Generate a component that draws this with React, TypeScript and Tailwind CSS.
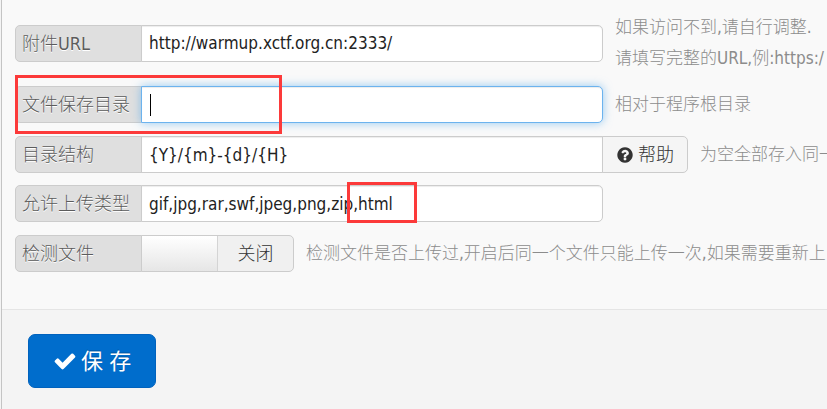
import { useId, useState, type ReactNode } from "react";

const inputBase = "h-[37px] w-[462px] min-w-0 border bg-white px-[7px] text-[17px] text-[#222] outline-none";
const inputPlain = "border-[#ccc] shadow-[inset_0_1px_1px_rgba(0,0,0,0.075)]";
const inputActive = "border-[#6cb3ee] shadow-[inset_0_1px_1px_rgba(0,0,0,0.075),0_0_10px_rgba(82,168,236,0.6)]";

function AddOn({ htmlFor, children }: { htmlFor: string; children: ReactNode }) {
  return (
    <label
      htmlFor={htmlFor}
      className="-mr-px flex h-[37px] w-[127px] shrink-0 items-center whitespace-nowrap rounded-l-[5px] border border-[#ccc] bg-[#dfdfdf] pl-1.5 text-[#5c5c5c] [text-shadow:0_1px_0_#fff]"
    >
      {children}
    </label>
  );
}

function Hint({ children }: { children: ReactNode }) {
  return (
    <p className="min-w-0 flex-1 overflow-hidden whitespace-nowrap text-[17px] leading-[31px] text-[#8c8c8c]">
      {children}
    </p>
  );
}

function HelpIcon() {
  return (
    <svg viewBox="0 0 1792 1792" className="size-[18px]" fill="currentColor" aria-hidden="true">
      <path d="M1024 1376v-192q0-14-9-23t-23-9h-192q-14 0-23 9t-9 23v192q0 14 9 23t23 9h192q14 0 23-9t9-23zm256-672q0-88-55.5-163t-138.5-116-170-41q-243 0-371 213-15 24 8 42l132 100q7 6 19 6 16 0 25-12 53-68 86-92 34-24 86-24 48 0 85.5 26t37.5 59q0 38-20 61t-68 45q-63 28-115.5 86.5t-52.5 125.5v36q0 14 9 23t23 9h192q14 0 23-9t9-23q0-19 21.5-49.5t54.5-49.5q32-18 49-28.5t46-35 44.5-48 28-60.5 12.5-81zm384 192q0 209-103 385.5t-279.5 279.5-385.5 103-385.5-103-279.5-279.5-103-385.5 103-385.5 279.5-279.5 385.5-103 385.5 103 279.5 279.5 103 385.5z" />
    </svg>
  );
}

function CheckIcon() {
  return (
    <svg viewBox="0 0 1792 1792" className="size-6" fill="currentColor" aria-hidden="true">
      <path d="M1671 566q0 40-28 68l-724 724-136 136q-28 28-68 28t-68-28l-136-136-362-362q-28-28-28-68t28-68l136-136q28-28 68-28t68 28l294 295 656-657q28-28 68-28t68 28l136 136q28 28 28 68z" />
    </svg>
  );
}

export default function App() {
  const id = useId();
  const [url, setUrl] = useState("http://warmup.xctf.org.cn:2333/");
  const [dir, setDir] = useState("");
  const [pattern, setPattern] = useState("{Y}/{m}-{d}/{H}");
  const [types, setTypes] = useState("gif,jpg,rar,swf,jpeg,png,zip,html");
  const [check, setCheck] = useState(false);

  return (
    <div className="flex min-h-screen overflow-hidden bg-[#f4f4f4] pl-px font-['DejaVu_Sans_Condensed','Noto_Sans_CJK_SC',sans-serif] text-[18px] font-light text-[#333]">
      <form className="flex min-w-0 flex-1 flex-col border-l border-[#c4c4c4]" onSubmit={(e) => e.preventDefault()}>
        <div className="bg-[#f9f9f9] pb-[37px] pl-[13px] pt-3">
          <div className="flex items-center gap-3">
            <div className="flex">
              <AddOn htmlFor={`${id}-url`}>附件URL</AddOn>
              <input
                id={`${id}-url`}
                className={`${inputBase} ${inputPlain} rounded-r-[5px]`}
                value={url}
                onChange={(e) => setUrl(e.target.value)}
              />
            </div>
            <Hint>
              如果访问不到,请自行调整.
              <br />
              请填写完整的URL,例:https:/
            </Hint>
          </div>

          <div className="mt-3 flex h-[37px] items-center gap-3">
            <div className="relative flex">
              <AddOn htmlFor={`${id}-dir`}>文件保存目录</AddOn>
              <input
                id={`${id}-dir`}
                className={`${inputBase} ${inputActive} relative rounded-r-[5px]`}
                value={dir}
                onChange={(e) => setDir(e.target.value)}
              />
              <span className="pointer-events-none absolute left-[135px] top-2 h-[22px] w-px bg-black" />
              <span className="pointer-events-none absolute -top-[11px] left-0 h-[59px] w-[267px] border-3 border-[#fc3a3a]" />
            </div>
            <Hint>相对于程序根目录</Hint>
          </div>

          <div className="mt-[13px] flex h-[37px] items-center gap-3">
            <div className="flex">
              <AddOn htmlFor={`${id}-pattern`}>目录结构</AddOn>
              <input
                id={`${id}-pattern`}
                className={`${inputBase} ${inputPlain}`}
                value={pattern}
                onChange={(e) => setPattern(e.target.value)}
              />
              <button
                type="button"
                className="-ml-px flex h-[37px] w-[86px] shrink-0 items-center justify-center gap-1 rounded-r-[5px] border border-[#ccc] bg-[#f5f5f5]"
              >
                <HelpIcon />
                帮助
              </button>
            </div>
            <Hint>为空全部存入同一</Hint>
          </div>

          <div className="mt-3 flex h-[37px] items-center">
            <div className="relative flex">
              <AddOn htmlFor={`${id}-types`}>允许上传类型</AddOn>
              <input
                id={`${id}-types`}
                className={`${inputBase} ${inputPlain} rounded-r-[5px]`}
                value={types}
                onChange={(e) => setTypes(e.target.value)}
              />
              <span className="pointer-events-none absolute -top-[3px] left-[332px] h-[41px] w-[70px] border-3 border-[#fc3a3a]" />
            </div>
          </div>

          <div className="mt-[13px] flex h-[37px] items-center gap-3">
            <div className="flex">
              <AddOn htmlFor={`${id}-check`}>检测文件</AddOn>
              <label className="relative flex h-[37px] w-[153px] cursor-pointer overflow-hidden rounded-r-[5px] border border-[#ccc] bg-[#f0f0f0]">
                <input
                  id={`${id}-check`}
                  type="checkbox"
                  className="peer absolute inset-0 opacity-0"
                  checked={check}
                  onChange={(e) => setCheck(e.target.checked)}
                />
                <span className="w-[76px] border-r border-[#d4d4d4] bg-linear-to-b from-white to-[#e6e6e6] peer-checked:order-2" />
                <span className="flex flex-1 items-center justify-center">{check ? "开启" : "关闭"}</span>
              </label>
            </div>
            <Hint>检测文件是否上传过,开启后同一个文件只能上传一次,如果需要重新上</Hint>
          </div>
        </div>

        <div className="flex-1 border-t border-[#e5e5e5] bg-[#f4f4f4] px-[26px] pb-5 pt-6">
          <button
            type="submit"
            className="flex h-[54px] items-center gap-1 rounded-[7px] border border-[#0062bd] bg-[#006dcc] px-6 text-[22px] font-normal text-white [text-shadow:0_-1px_0_rgba(0,0,0,0.25)]"
          >
            <CheckIcon />
            保 存
          </button>
        </div>
      </form>
    </div>
  );
}
